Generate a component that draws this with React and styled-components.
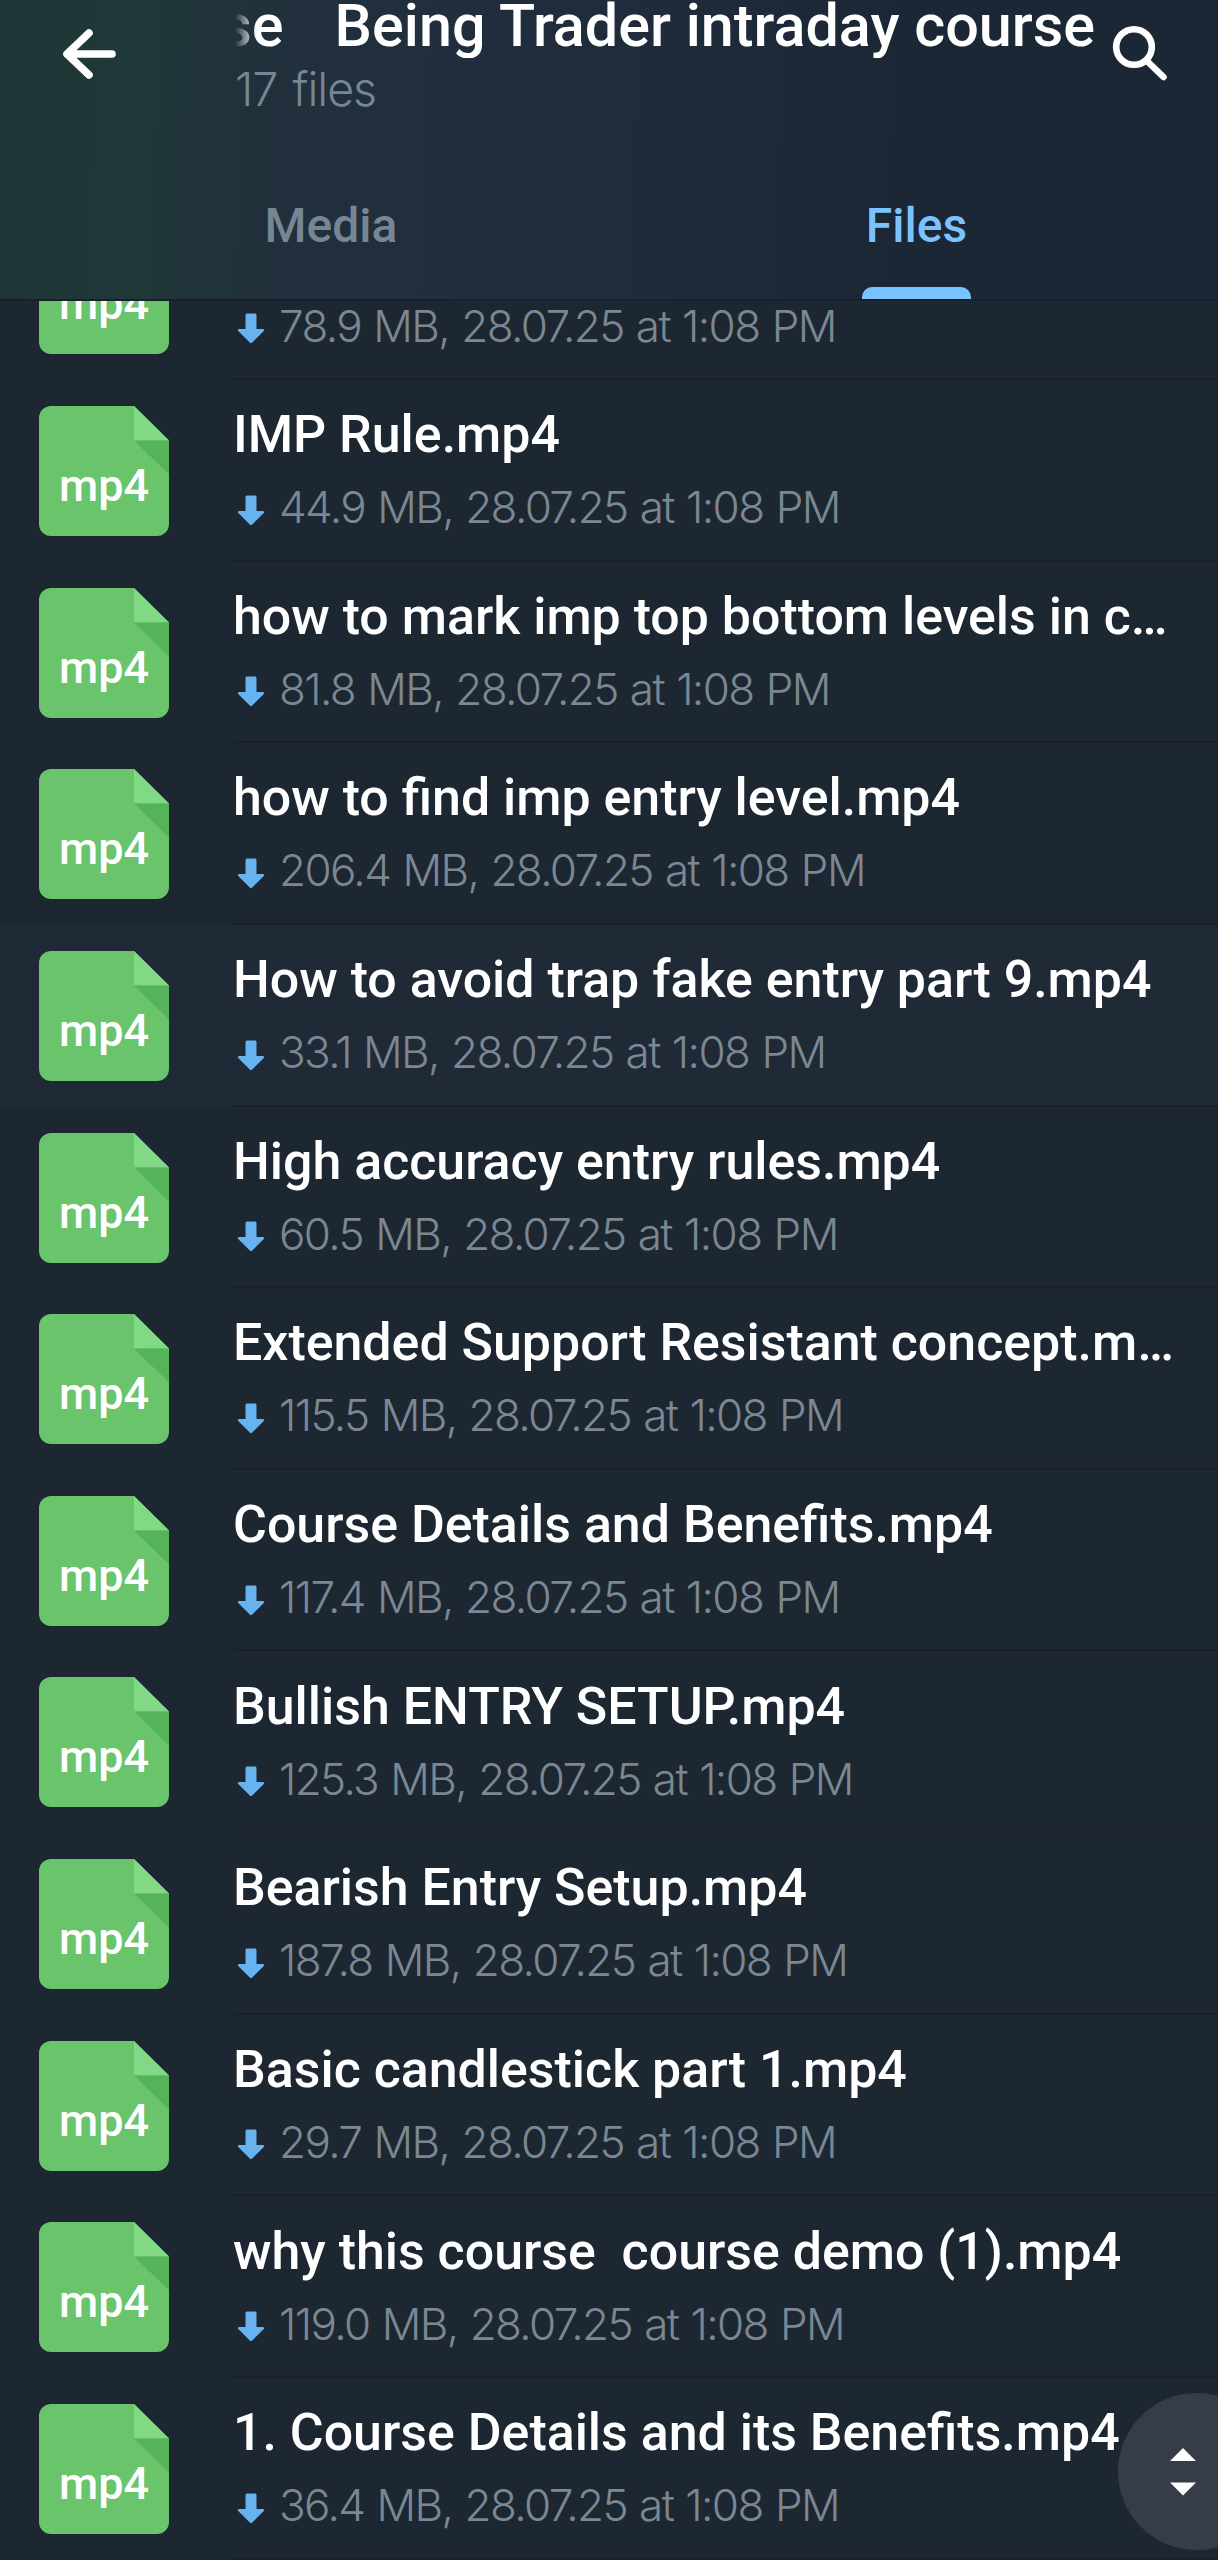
import React from "react";
import styled, { createGlobalStyle } from "styled-components";

const GlobalStyle = createGlobalStyle`
  html, body { margin: 0; padding: 0; background: #1d2732; }
  * { box-sizing: border-box; }
`;

const Screen = styled.div`
  position: relative;
  width: 1218px;
  height: 2560px;
  overflow: hidden;
  display: flex;
  flex-direction: column;
  background: #1d2732;
  font-family: Roboto, "Liberation Sans", sans-serif;
`;

const Header = styled.header`
  flex: none;
  height: 301px;
  display: flex;
  flex-direction: column;
  justify-content: space-between;
  border-bottom: 2px solid #17202b;
  background: linear-gradient(92deg, #1f3436 0, #203737 90px, #203937 140px, #20343a 200px, #21303c 290px, #212d3c 480px, #1f2b3a 700px, #1c2736 900px, #1c2735 100%);
`;

const TopBar = styled.div`
  display: flex;
  height: 130px;
`;

const BackButton = styled.div`
  flex: none;
  width: 235px;
  padding: 24px 0 0 58px;
`;

const Heading = styled.div`
  flex: 1;
  min-width: 0;
  overflow: hidden;
`;

const Marquee = styled.div`
  display: flex;
  justify-content: flex-end;
  gap: 51px;
  width: 860px;
  height: 64px;
  margin-top: -6px;
  overflow: hidden;
  white-space: nowrap;
  color: #fff;
  font-size: 59.3px;
  font-weight: 520;
  line-height: 64px;
  mask-image: linear-gradient(90deg, transparent 0, #000 22px);
`;

const Count = styled.div`
  margin-top: 3px;
  color: #768793;
  font-family: Inter, Roboto, sans-serif;
  font-size: 46.5px;
  font-weight: 340;
  line-height: 56px;
  letter-spacing: -1px;
  word-spacing: 3px;
`;

const SearchButton = styled.div`
  flex: none;
  width: 116px;
  padding: 20px 0 0 4px;
`;

const Tabs = styled.nav`
  display: grid;
  grid-template-columns: 662px 509px;
  height: 101px;
`;

const Tab = styled.div`
  display: flex;
  flex-direction: column;
  align-items: center;
  justify-content: space-between;
  color: ${(p) => (p.$active ? "#7cc2fc" : "#768793")};
  font-size: 48px;
  font-weight: 500;
  line-height: 55px;
`;

const Indicator = styled.div`
  width: 109px;
  height: 12px;
  border-radius: 10px 10px 0 0;
  background: #78c3ff;
`;

const List = styled.main`
  flex: 1;
  min-height: 0;
  overflow: hidden;
`;

const Rows = styled.div`
  margin-top: -102.65px;
`;

const Row = styled.div`
  display: flex;
  height: 181.65px;
  padding-left: 39px;
  background: ${(p) => (p.$pressed ? "#202a36" : "transparent")};
`;

const FileIcon = styled.div`
  display: grid;
  flex: none;
  width: 130px;
  height: 130px;
  margin: 26px 64px 0 0;

  > * { grid-area: 1 / 1; }
`;

const Extension = styled.span`
  padding-top: 52px;
  text-align: center;
  color: #fff;
  font-size: 45px;
  font-weight: 500;
  line-height: 56px;
`;

const Info = styled.div`
  flex: 1;
  min-width: 0;
  padding: 25.2px 30px 0 0;
  border-bottom: 2px solid #18212c;
`;

const Name = styled.div`
  height: 60px;
  overflow: hidden;
  white-space: pre;
  text-overflow: ellipsis;
  color: #fff;
  font-size: 51.9px;
  font-weight: 550;
  line-height: 60px;
`;

const Meta = styled.div`
  display: flex;
  align-items: center;
  gap: 14px;
  margin-top: 16px;
  padding-left: 4px;
  color: #7b8792;
  font-family: Inter, Roboto, sans-serif;
  font-size: 44px;
  font-weight: 330;
  line-height: 52px;
  letter-spacing: -1.6px;
  word-spacing: 1.4px;
  white-space: pre;
`;

const ArrowIcon = styled.svg`
  flex: none;
  margin-top: 6px;
`;

const Scroller = styled.div`
  position: absolute;
  left: 1118px;
  top: 2393px;
  width: 157px;
  height: 157px;
  border-radius: 50%;
  background: #363d49;
  padding: 55px 0 0 52px;
`;

const files = [
  ["", "78.9 MB"],
  ["IMP Rule.mp4", "44.9 MB"],
  ["how to mark imp top bottom levels in c…", "81.8 MB"],
  ["how to find imp entry level.mp4", "206.4 MB"],
  ["How to avoid trap fake entry part 9.mp4", "33.1 MB"],
  ["High accuracy entry rules.mp4", "60.5 MB"],
  ["Extended Support Resistant concept.m…", "115.5 MB"],
  ["Course Details and Benefits.mp4", "117.4 MB"],
  ["Bullish ENTRY SETUP.mp4", "125.3 MB"],
  ["Bearish Entry Setup.mp4", "187.8 MB"],
  ["Basic candlestick part 1.mp4", "29.7 MB"],
  ["why this course  course demo (1).mp4", "119.0 MB"],
  ["1. Course Details and its Benefits.mp4", "36.4 MB"],
];

function Document() {
  return (
    <FileIcon>
      <svg width="130" height="130" viewBox="0 0 130 130">
        <path d="M12 0H95L130 34.5V118a12 12 0 0 1-12 12H12a12 12 0 0 1-12-12V12A12 12 0 0 1 12 0Z" fill="#6ac46c" />
        <path d="M95 0L130 34.5H95Z" fill="#82d985" />
        <path d="M95 34.5H130V68.5Z" fill="#55b45a" />
      </svg>
      <Extension>mp4</Extension>
    </FileIcon>
  );
}

function DownloadArrow() {
  return (
    <ArrowIcon width="28" height="31" viewBox="0 0 28 31">
      <path d="M10 0.5H18Q19.5 0.5 19.5 2V16H26Q28 16.5 26.8 18L15.2 29.6Q14 30.8 12.8 29.6L1.2 18Q0 16.5 2 16H8.5V2Q8.5 0.5 10 0.5Z" fill="#66b3f0" />
    </ArrowIcon>
  );
}

export default function App() {
  return (
    <Screen>
      <GlobalStyle />
      <Header>
        <TopBar>
          <BackButton>
            <svg width="62" height="60" viewBox="0 0 62 60" fill="none" stroke="#fff" strokeWidth="7.6" strokeLinecap="round" strokeLinejoin="round">
              <path d="M9 30H54M31 9L9 30L31 51" />
            </svg>
          </BackButton>
          <Heading>
            <Marquee>
              <span>se</span>
              <span>Being Trader intraday course</span>
            </Marquee>
            <Count>17 files</Count>
          </Heading>
          <SearchButton>
            <svg width="62" height="64" viewBox="0 0 62 64" fill="none" stroke="#fff" strokeWidth="6.6" strokeLinecap="round">
              <circle cx="28" cy="27" r="17.8" />
              <path d="M41 41L57.5 57" />
            </svg>
          </SearchButton>
        </TopBar>
        <Tabs>
          <Tab>Media</Tab>
          <Tab $active>
            Files
            <Indicator />
          </Tab>
        </Tabs>
      </Header>
      <List>
        <Rows>
          {files.map(([name, size], i) => (
            <Row key={i} $pressed={i === 4}>
              <Document />
              <Info>
                <Name>{name}</Name>
                <Meta>
                  <DownloadArrow />
                  <span>{size}, 28.07.25 at 1:08 PM</span>
                </Meta>
              </Info>
            </Row>
          ))}
        </Rows>
      </List>
      <Scroller>
        <svg width="26" height="48" viewBox="0 0 26 48" fill="#fff">
          <path d="M0 13L13 0L26 13ZM0 34.5H26L13 47.5Z" />
        </svg>
      </Scroller>
    </Screen>
  );
}
